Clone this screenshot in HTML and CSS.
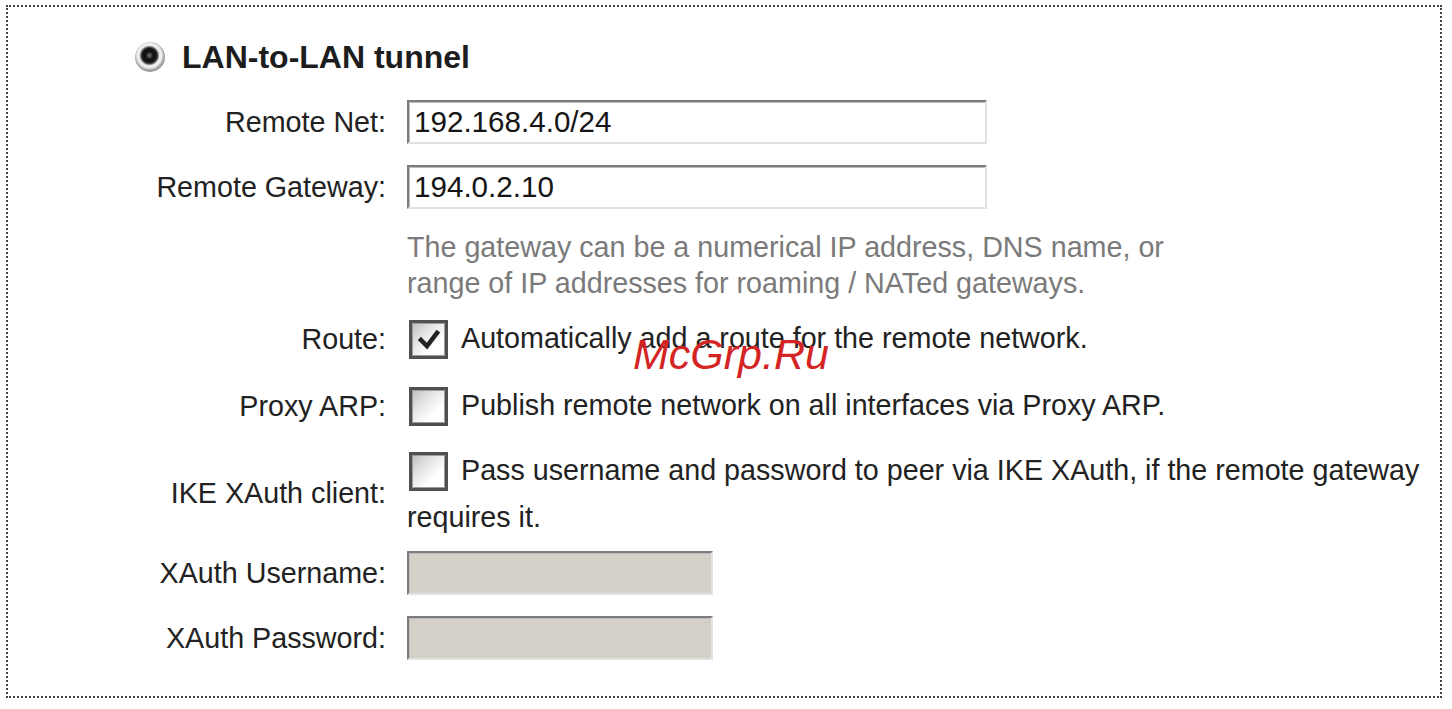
FILE: index.html
```html
<!DOCTYPE html>
<html>
  <head>
    <title>LAN-to-LAN tunnel</title>
    <meta name="viewport" content="width=device-width, initial-scale=1.0" />
    <link rel="stylesheet" href="styles.css">
  </head>
  <body>
    <div class="panel">
      <div class="mode">
        <span class="radio"></span>
        <span class="mode-title">LAN-to-LAN tunnel</span>
      </div>

      <div class="rows">
        <div class="row">
          <label class="label">Remote Net:</label>
          <input class="text" type="text" value="192.168.4.0/24" readonly />
        </div>
        <div class="row">
          <label class="label">Remote Gateway:</label>
          <input class="text" type="text" value="194.0.2.10" readonly />
        </div>
        <div class="row row-hint">
          <span></span>
          <p class="hint">
            The gateway can be a numerical IP address, DNS name, or<br />
            range of IP addresses for roaming / NATed gateways.
          </p>
        </div>
        <div class="row row-check">
          <label class="label">Route:</label>
          <div class="check-line">
            <span class="check">
              <svg width="26" height="26" viewBox="0 0 26 26"><path d="M5 13 L11 19 L21 6" fill="none" stroke="#222" stroke-width="4.5" stroke-linecap="square" /></svg>
            </span>
            <span>Automatically add a route for the remote network.</span>
          </div>
        </div>
        <div class="row row-check row-proxy">
          <label class="label">Proxy ARP:</label>
          <div class="check-line">
            <span class="check"></span>
            <span>Publish remote network on all interfaces via Proxy ARP.</span>
          </div>
        </div>
        <div class="row row-ike">
          <label class="label">IKE XAuth client:</label>
          <div>
            <div class="check-line">
              <span class="check"></span>
              <span>Pass username and password to peer via IKE XAuth, if the remote gateway</span>
            </div>
            <div class="wrap-line">requires it.</div>
          </div>
        </div>
        <div class="row row-user">
          <label class="label">XAuth Username:</label>
          <input class="text text-off" type="text" disabled />
        </div>
        <div class="row">
          <label class="label">XAuth Password:</label>
          <input class="text text-off" type="password" disabled />
        </div>
      </div>

      <div class="watermark">McGrp.Ru</div>
    </div>
  </body>
</html>
```

FILE: styles.css
```css
body {
  margin: 0;
  background: #fff;
  font-family: "Liberation Sans", Arial, sans-serif;
  color: #222;
}
.panel {
  position: relative;
  box-sizing: border-box;
  width: 1436px;
  height: 693px;
  margin: 5px 0 0 6px;
  border: 2px dotted #444;
}
.mode {
  display: flex;
  align-items: center;
  gap: 17px;
  height: 34px;
  padding: 33px 0 0 127px;
}
.radio {
  width: 30px;
  height: 30px;
  border-radius: 50%;
  background: radial-gradient(circle at 48% 45%, #777 0, #111 4px, #151515 7px, #5a5a5a 8.5px, #e6e6e6 10px, #f2f2f2 12px, #9a9a9a 15px);
}
.mode-title {
  font-size: 32px;
  font-weight: bold;
  color: #1d1d1d;
}
.rows {
  display: flex;
  flex-direction: column;
  gap: 21px;
  margin-top: 26px;
}
.row {
  display: grid;
  grid-template-columns: 378px 1fr;
  column-gap: 21px;
  align-items: center;
  font-size: 28.7px;
}
.label {
  text-align: right;
}
.text {
  box-sizing: border-box;
  width: 580px;
  height: 44px;
  padding: 0 5px;
  margin: 0;
  font-family: "Liberation Sans", Arial, sans-serif;
  font-size: 29.6px;
  color: #151515;
  background: #fff;
  border: 2px solid;
  border-color: #7c7c7c #e2e2e2 #e2e2e2 #7c7c7c;
  box-shadow: inset 1px 1px 0 #bdbdbd;
  outline: none;
}
.text-off {
  width: 306px;
  background: #d4d0c8;
}
.hint {
  margin: -1px 0 0;
  line-height: 36px;
  color: #7a7a7a;
}
.check-line {
  display: flex;
  align-items: center;
  gap: 13px;
  height: 39px;
  white-space: nowrap;
}
.check {
  box-sizing: border-box;
  display: flex;
  align-items: center;
  justify-content: center;
  flex: none;
  width: 39px;
  height: 39px;
  margin-left: 2px;
  border: 3px solid #505050;
  background: linear-gradient(135deg, #bcbcbc 0, #e4e4e4 35%, #fff 70%);
  box-shadow: inset 0 0 0 1px #9c9c9c;
}
.row-check .check-line span:last-child {
  margin-top: -3px;
}
.row-check {
  margin-top: -2px;
}
.row-proxy {
  margin-top: 7px;
}
.row-ike {
  margin-top: 5px;
}
.row-ike .check-line span:last-child {
  margin-top: -3px;
}
.wrap-line {
  margin-top: 8px;
  line-height: 36px;
}
.row-user {
  margin-top: -5px;
}
.watermark {
  position: absolute;
  left: 625px;
  top: 323px;
  font-size: 43px;
  font-style: italic;
  color: #d42424;
}
```
